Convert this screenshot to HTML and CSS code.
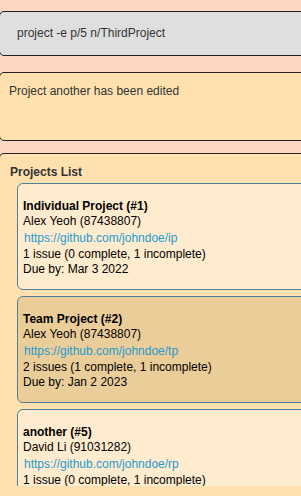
FILE: index.html
```html
<!DOCTYPE html>
<html>
<head>
<meta charset="utf-8">
<link rel="stylesheet" href="styles.css">
</head>
<body>
<div class="app">
  <div class="command">project -e p/5 n/ThirdProject</div>
  <div class="result">Project another has been edited</div>
  <div class="panel">
    <div class="panel-title">Projects List</div>
    <div class="list">
      <div class="card">
        <div class="title">Individual Project (#1)</div>
        <div class="line">Alex Yeoh (87438807)</div>
        <div class="link">https://github.com/johndoe/ip</div>
        <div class="line">1 issue (0 complete, 1 incomplete)</div>
        <div class="line">Due by: Mar 3 2022</div>
      </div>
      <div class="card selected">
        <div class="title">Team Project (#2)</div>
        <div class="line">Alex Yeoh (87438807)</div>
        <div class="link">https://github.com/johndoe/tp</div>
        <div class="line">2 issues (1 complete, 1 incomplete)</div>
        <div class="line">Due by: Jan 2 2023</div>
      </div>
      <div class="card">
        <div class="title">another (#5)</div>
        <div class="line">David Li (91031282)</div>
        <div class="link">https://github.com/johndoe/rp</div>
        <div class="line">1 issue (0 complete, 1 incomplete)</div>
      </div>
    </div>
  </div>
</div>
</body>
</html>
```
FILE: styles.css
```css
html, body {
  margin: 0;
  padding: 0;
}
body {
  background: #ffd6c4;
  font-family: "Liberation Sans", Arial, sans-serif;
  font-size: 12px;
  color: #000;
}
.app {
  width: 301px;
  height: 496px;
  overflow: hidden;
  display: flex;
  flex-direction: column;
}
.command {
  margin-top: 11px;
  margin-left: -1px;
  width: 320px;
  height: 43px;
  flex: none;
  background: #dfdfdf;
  border: 1px solid #222;
  border-radius: 5px;
  color: #333;
  padding-left: 17px;
  line-height: 43px;
}
.result {
  margin-top: 16px;
  margin-left: -1px;
  width: 320px;
  height: 69px;
  flex: none;
  box-sizing: border-box;
  background: #ffe1b0;
  border: 1px solid #222;
  border-radius: 5px;
  color: #333;
  padding-left: 9px;
  padding-top: 11px;
}
.panel {
  margin-top: 12px;
  margin-left: -1px;
  width: 320px;
  flex: 1;
  background: #ffe1b0;
  border: 1px solid #222;
  border-bottom: none;
  border-radius: 5px 5px 0 0;
  display: flex;
  flex-direction: column;
  min-height: 0;
}
.panel-title {
  font-weight: bold;
  color: #333;
  padding: 11px 0 0 10px;
  line-height: 14px;
  height: 18px;
  flex: none;
}
.list {
  margin-left: 17px;
  height: 303px;
  flex: none;
  overflow: hidden;
  display: flex;
  flex-direction: column;
  gap: 6px;
}
.card {
  flex: none;
  background: #ffebcd;
  border: 1px solid #4c7f9c;
  border-radius: 6px;
  padding: 15px 0 12px 5px;
  width: 320px;
}
.card.selected {
  background: #ebcd99;
}
.title {
  font-weight: bold;
  line-height: 15px;
}
.line {
  line-height: 15px;
}
.link {
  color: #1d9bd1;
  line-height: 17px;
  padding-left: 1px;
  margin-top: 1px;
}
```
